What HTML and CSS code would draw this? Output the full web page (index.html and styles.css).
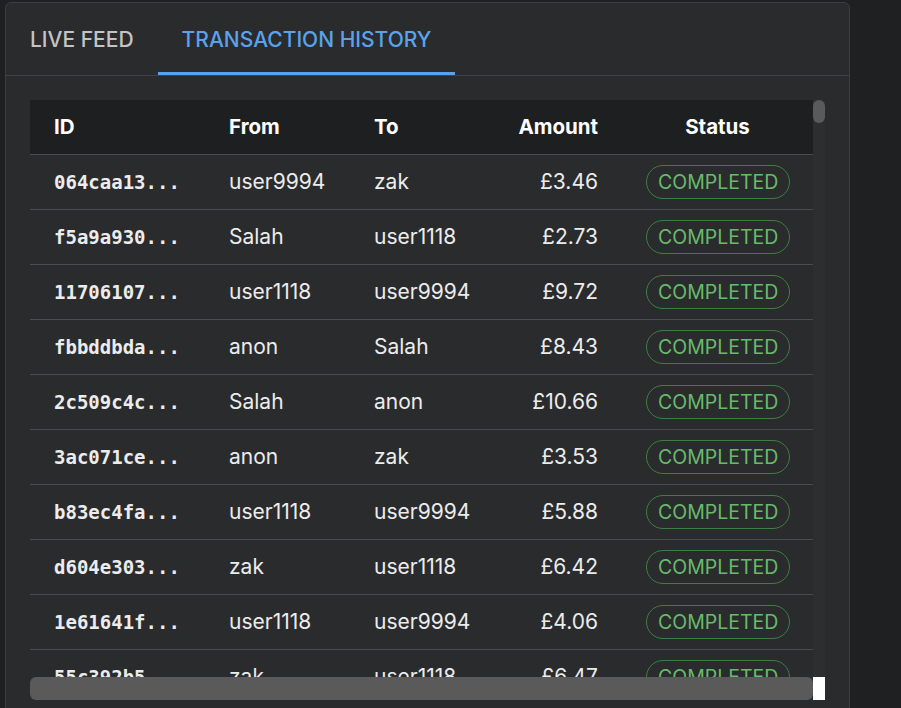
FILE: index.html
```html
<!DOCTYPE html>
<html lang="en">
<head>
<meta charset="utf-8">
<title>Transactions</title>
<link rel="stylesheet" href="styles.css">
</head>
<body>
<div class="card">
  <div class="tabs">
    <div class="tab">Live Feed</div>
    <div class="tab active">Transaction History</div>
  </div>
  <div class="content">
    <div class="scroller">
      <div class="viewport">
        <table class="tx">
          <colgroup>
            <col class="c-id"><col class="c-from"><col class="c-to"><col class="c-amt"><col class="c-status">
          </colgroup>
          <thead>
            <tr><th>ID</th><th>From</th><th>To</th><th class="num">Amount</th><th class="center">Status</th></tr>
          </thead>
          <tbody>
            <tr><td class="id">064caa13...</td><td>user9994</td><td>zak</td><td class="num">£3.46</td><td class="center"><span class="chip">Completed</span></td></tr>
            <tr><td class="id">f5a9a930...</td><td>Salah</td><td>user1118</td><td class="num">£2.73</td><td class="center"><span class="chip">Completed</span></td></tr>
            <tr><td class="id">11706107...</td><td>user1118</td><td>user9994</td><td class="num">£9.72</td><td class="center"><span class="chip">Completed</span></td></tr>
            <tr><td class="id">fbbddbda...</td><td>anon</td><td>Salah</td><td class="num">£8.43</td><td class="center"><span class="chip">Completed</span></td></tr>
            <tr><td class="id">2c509c4c...</td><td>Salah</td><td>anon</td><td class="num">£10.66</td><td class="center"><span class="chip">Completed</span></td></tr>
            <tr><td class="id">3ac071ce...</td><td>anon</td><td>zak</td><td class="num">£3.53</td><td class="center"><span class="chip">Completed</span></td></tr>
            <tr><td class="id">b83ec4fa...</td><td>user1118</td><td>user9994</td><td class="num">£5.88</td><td class="center"><span class="chip">Completed</span></td></tr>
            <tr><td class="id">d604e303...</td><td>zak</td><td>user1118</td><td class="num">£6.42</td><td class="center"><span class="chip">Completed</span></td></tr>
            <tr><td class="id">1e61641f...</td><td>user1118</td><td>user9994</td><td class="num">£4.06</td><td class="center"><span class="chip">Completed</span></td></tr>
            <tr><td class="id">55c392b5...</td><td>zak</td><td>user1118</td><td class="num">£6.47</td><td class="center"><span class="chip">Completed</span></td></tr>
            <tr><td class="id">9a1f03d2...</td><td>anon</td><td>user9994</td><td class="num">£7.12</td><td class="center"><span class="chip">Completed</span></td></tr>
          </tbody>
        </table>
      </div>
      <div class="vtrack"><div class="vthumb"></div></div>
      <div class="htrack"><div class="hthumb"></div></div>
      <div class="corner"></div>
    </div>
  </div>
</div>
</body>
</html>
```
FILE: styles.css
```css
* { box-sizing: border-box; }
html, body { margin: 0; padding: 0; }
body {
  background: #1f2022;
  font-family: Inter, "Noto Sans", "Liberation Sans", sans-serif;
  color: #ececec;
  overflow: hidden;
  height: 708px;
}
.card {
  margin: 2px 0 0 5px;
  width: 845px;
  height: 760px;
  background: #2a2b2d;
  border: 1px solid #3c3d40;
  border-radius: 6px;
}
.tabs {
  display: flex;
  height: 73px;
  border-bottom: 1px solid #414245;
}
.tab {
  height: 72px;
  padding: 0 24px;
  display: flex;
  align-items: center;
  font-size: 21px;
  font-weight: 500;
  text-transform: uppercase;
  color: #c4c4c4;
}
.tab.active {
  color: #5aa2ec;
  box-shadow: inset 0 -3px 0 #5aa2ec;
}
.content {
  padding: 24px 23px 0 24px;
}
.scroller {
  display: grid;
  grid-template-columns: 783px 12px;
  grid-template-rows: 577px 23px;
}
.viewport {
  overflow: hidden;
}
.tx {
  width: 783px;
  table-layout: fixed;
  border-collapse: separate;
  border-spacing: 0;
  font-size: 21px;
}
.c-id { width: 175px; }
.c-from { width: 145px; }
.c-to { width: 130px; }
.c-amt { width: 142px; }
.c-status { width: 191px; }
.tx th, .tx td {
  padding: 15px 24px;
  line-height: 24px;
  text-align: left;
  border-bottom: 1px solid #4a4b4e;
  white-space: nowrap;
}
.tx th {
  background: #1e1f21;
  font-weight: 700;
  font-size: 20.5px;
  color: #ffffff;
}
.tx td { color: #ececec; font-weight: 400; }
.tx .num { text-align: right; }
.tx .center { text-align: center; }
.tx td.id {
  font-family: "DejaVu Sans Mono", "Liberation Mono", monospace;
  font-size: 19px;
  font-weight: 700;
}
.tx td.center { padding-top: 10px; padding-bottom: 10px; }
.chip {
  display: inline-block;
  height: 34px;
  line-height: 32px;
  padding: 0 11px;
  border: 1px solid #3f7e42;
  border-radius: 17px;
  color: #66bb6a;
  font-size: 19.5px;
  text-transform: uppercase;
  vertical-align: middle;
}
.vtrack { background: #2d2e30; }
.vthumb {
  height: 23px;
  background: #5a5a5a;
  border-radius: 6px;
}
.htrack { display: flex; }
.hthumb {
  flex: 1;
  background: #5a5a5a;
  border-radius: 6px;
}
.corner { background: #ffffff; }
```
